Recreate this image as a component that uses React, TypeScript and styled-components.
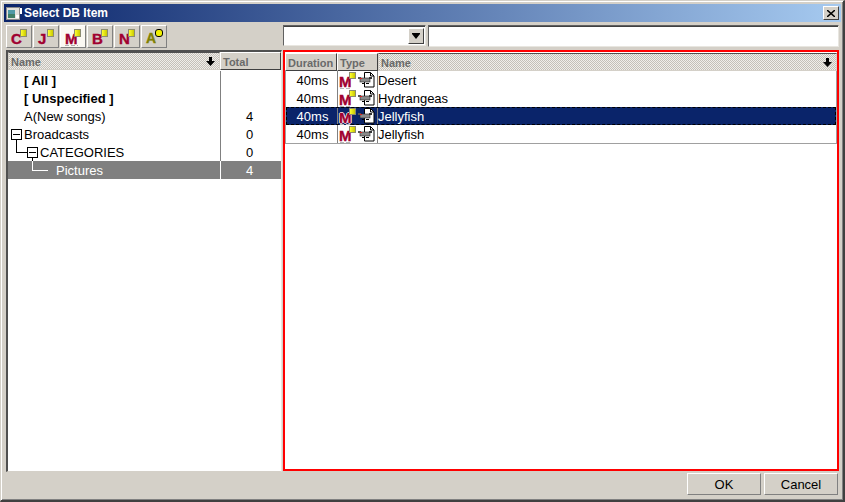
import React from 'react';
import styled, { createGlobalStyle } from 'styled-components';

const GlobalStyle = createGlobalStyle`
  html, body { margin: 0; padding: 0; background: #d4d0c8; }
  * { box-sizing: border-box; }
`;

const hatch = `repeating-conic-gradient(#c4c0b8 0% 25%, #f0eeea 0% 50%) 0 0 / 2px 2px`;
const raised = `
  border: 1px solid;
  border-color: #ffffff #808080 #808080 #ffffff;
`;

const Window = styled.div`
  width: 845px;
  height: 502px;
  display: flex;
  flex-direction: column;
  background: #d4d0c8;
  font-family: "Liberation Sans", Arial, sans-serif;
  font-size: 13px;
  color: #000;
  border-style: solid;
  border-width: 1px 2px 2px 1px;
  border-color: #d4d0c8 #404040 #404040 #d4d0c8;
  box-shadow: inset 1px 1px 0 #fff, inset -1px -1px 0 #808080;
  padding: 3px 2px 2px 3px;
  overflow: hidden;
`;

const TitleBar = styled.div`
  height: 18px;
  flex: none;
  display: flex;
  align-items: center;
  gap: 2px;
  padding: 0 2px;
  background: linear-gradient(to right, #0a246a, #a6caf0);
  color: #fff;
  font-weight: bold;
  font-size: 12px;
`;

const TitleText = styled.span`
  flex: 1;
`;

const CloseButton = styled.div`
  width: 16px;
  height: 14px;
  display: flex;
  align-items: center;
  justify-content: center;
  background: #d4d0c8;
  border: 1px solid;
  border-color: #fff #404040 #404040 #fff;
`;

const Toolbar = styled.div`
  height: 28px;
  flex: none;
  display: flex;
  align-items: flex-start;
  padding: 3px 0 0 2px;
`;

const ToolGroup = styled.div`
  width: 277px;
  display: flex;
  gap: 1px;
`;

const ToolButton = styled.div<{ $active?: boolean }>`
  width: 26px;
  height: 23px;
  display: flex;
  align-items: center;
  justify-content: center;
  ${raised}
  background: ${p => (p.$active ? '#fbf8f2' : '#d4d0c8')};
`;

const Combo = styled.div`
  width: 143px;
  height: 21px;
  display: flex;
  justify-content: flex-end;
  align-items: center;
  background: #fff;
  border: 1px solid;
  border-color: #606060 #e8e6e0 #e8e6e0 #606060;
  box-shadow: inset 0 1px 0 #404040;
  padding: 1px 1px 0 0;
`;

const ComboArrow = styled.div`
  width: 16px;
  height: 16px;
  display: flex;
  align-items: center;
  justify-content: center;
  background: #d4d0c8;
  border: 1px solid;
  border-color: #fff #404040 #404040 #fff;
`;

const SearchInput = styled.div`
  width: 411px;
  height: 22px;
  margin-left: 2px;
  background: #fff;
  border: 1px solid;
  border-color: #606060 #e8e6e0 #e8e6e0 #606060;
  box-shadow: inset 0 1px 0 #404040;
`;

const Panels = styled.div`
  flex: none;
  display: flex;
  padding-left: 2px;
`;

const LeftPanel = styled.div`
  width: 276px;
  height: 422px;
  flex: none;
  background: #fff;
  border-style: solid;
  border-width: 2px 1px 1px 2px;
  border-color: #505050 #e8e6e0 #d4d0c8 #505050;
  display: flex;
  flex-direction: column;
`;

const RightPanel = styled.div`
  width: 556px;
  height: 421px;
  margin-left: 1px;
  flex: none;
  background: #fff;
  border: 2px solid #ff0000;
  padding-top: 1px;
  display: flex;
  flex-direction: column;
`;

const HeaderRow = styled.div<{ $gap?: boolean }>`
  height: 18px;
  flex: none;
  display: flex;
  margin-bottom: ${p => (p.$gap ? 1 : 0)}px;
`;

const HeaderCell = styled.div<{ $width?: number; $sorted?: boolean }>`
  ${p => (p.$width ? `width: ${p.$width}px; flex: none;` : 'flex: 1;')}
  display: flex;
  align-items: center;
  justify-content: space-between;
  padding: 1px 4px 0 2px;
  color: #6a6a6a;
  font-weight: bold;
  font-size: 11px;
  border: 1px solid;
  border-color: #fff #404040 #404040 #fff;
  background: #d4d0c8;
  ${p =>
    p.$sorted &&
    `background: ${hatch};
     border-color: #505050 #d4d0c8 #d4d0c8 #d4d0c8;`}
`;

const TreeRow = styled.div<{ $selected?: boolean }>`
  height: 18px;
  flex: none;
  display: flex;
  background: ${p => (p.$selected ? '#808080' : 'transparent')};
  color: ${p => (p.$selected ? '#fff' : '#000')};
`;

const TreeName = styled.div<{ $bold?: boolean; $indent: number }>`
  position: relative;
  width: 212px;
  flex: none;
  display: flex;
  align-items: center;
  gap: 2px;
  padding-left: ${p => p.$indent}px;
  font-weight: ${p => (p.$bold ? 'bold' : 'normal')};
  white-space: nowrap;
`;

const TreeTotal = styled.div<{ $selected?: boolean }>`
  flex: 1;
  display: flex;
  align-items: center;
  justify-content: center;
  border-left: 1px solid ${p => (p.$selected ? '#ffffff' : '#808080')};
  padding-right: 3px;
`;

const FileList = styled.div`
  border-left: 1px solid #a0a0a0;
  border-right: 1px solid #a0a0a0;
  border-bottom: 1px solid #a0a0a0;
  width: 552px;
  display: flex;
  flex-direction: column;
`;

const FileRow = styled.div<{ $selected?: boolean }>`
  height: 18px;
  display: flex;
  background: ${p => (p.$selected ? '#0a246a' : 'transparent')};
  color: ${p => (p.$selected ? '#fff' : '#000')};
  outline: ${p => (p.$selected ? '1px dashed #000' : 'none')};
  outline-offset: -1px;
`;

const DurationCell = styled.div`
  width: 51px;
  flex: none;
  text-align: center;
  line-height: 19px;
  padding-left: 2px;
`;

const TypeCell = styled.div`
  width: 41px;
  flex: none;
  display: flex;
  align-items: center;
  gap: 2px;
  padding-left: 1px;
  border-left: 1px solid #808080;
  border-right: 1px solid #808080;
`;

const FileName = styled.div`
  flex: 1;
  line-height: 19px;
`;

const Footer = styled.div`
  flex: 1;
  display: flex;
  justify-content: flex-end;
  align-items: flex-start;
  gap: 3px;
  padding: 1px 3px 0 0;
`;

const DialogButton = styled.div`
  width: 74px;
  height: 22px;
  display: flex;
  align-items: center;
  justify-content: center;
  ${raised}
`;

const LetterMark = styled.span<{ $olive?: boolean; $dashed?: boolean }>`
  position: relative;
  display: inline-block;
  width: 16px;
  height: 15px;
  font-weight: bold;
  font-size: ${p => (p.$olive ? 14 : 15)}px;
  line-height: 19px;
  color: ${p => (p.$olive ? '#808000' : '#a00030')};
  -webkit-text-stroke: 0.4px ${p => (p.$olive ? '#808000' : '#a00030')};

  ${p =>
    p.$dashed &&
    `&::after {
      content: '';
      position: absolute;
      left: 0;
      bottom: -2px;
      width: 13px;
      height: 1px;
      background: repeating-linear-gradient(to right, #b0b0b0 0 4px, transparent 4px 6px);
    }`}
`;

const Chip = styled.i<{ $round?: boolean }>`
  position: absolute;
  top: 0;
  right: 0;
  width: 7px;
  height: 8px;
  background: linear-gradient(to right, #ffff30, #c8c800);
  border: 1px solid #8c8c70;
  ${p =>
    p.$round &&
    `top: 0;
     right: -1px;
     border: 1px solid #000;
     border-radius: 3px;
     width: 8px;
     background: #f0f000;`}
`;

const RowMark = styled.span<{ $selected?: boolean }>`
  position: relative;
  display: inline-block;
  width: 17px;
  height: 16px;
  font-weight: bold;
  font-size: 15px;
  line-height: 19px;
  color: #a00030;
  -webkit-text-stroke: 0.4px #a00030;
  ${p => p.$selected && `text-shadow: 1px 0 0 #fff, -1px 0 0 #fff, 0 1px 0 #fff, 0 -1px 0 #fff;`}

  &::after {
    content: '';
    position: absolute;
    left: 1px;
    bottom: -1px;
    width: 12px;
    height: 1px;
    background: repeating-linear-gradient(to right, #b8b8b8 0 4px, transparent 4px 6px);
  }
`;

const RowChip = styled.i`
  position: absolute;
  top: 0;
  right: 0;
  width: 7px;
  height: 7px;
  background: linear-gradient(to right, #ffff30, #c8c800);
  border: 1px solid #8c8c70;
`;

const ExpandBox = styled.span`
  position: relative;
  flex: none;
  width: 11px;
  height: 11px;
  background: #fff;
  border: 1px solid #000;

  &::after {
    content: '';
    position: absolute;
    left: 1px;
    right: 1px;
    top: 4px;
    height: 1px;
    background: #000;
  }
`;

// connector lines of the tree, hung over the rows below their parent box
const Elbow = styled.span<{ $left: number; $top: number; $width: number; $height: number; $white?: boolean }>`
  position: absolute;
  left: ${p => p.$left}px;
  top: ${p => p.$top}px;
  width: ${p => p.$width}px;
  height: ${p => p.$height}px;
  border-left: 1px solid ${p => (p.$white ? '#fff' : '#000')};
  border-bottom: ${p => (p.$width ? `1px solid ${p.$white ? '#fff' : '#000'}` : 'none')};
`;

const SortArrow = () => (
  <svg width="9" height="9" viewBox="0 0 9 9">
    <path d="M3 0h3v4h3L4.5 9 0 4h3z" fill="#000" />
  </svg>
);

const CloseIcon = () => (
  <svg width="8" height="7" viewBox="0 0 8 7">
    <path d="M0 0l8 7M8 0L0 7" stroke="#000" strokeWidth="1.5" />
  </svg>
);

const AppIcon = () => (
  <svg width="16" height="13" viewBox="0 0 16 13">
    <rect x="0.5" y="0.5" width="13" height="12" fill="#e4e2dc" stroke="#8a8a8a" />
    <rect x="2" y="3" width="7" height="4" fill="#4f9aa6" />
    <rect x="2" y="7" width="7" height="4" fill="#3f7f66" />
    <rect x="10" y="8" width="3" height="3" fill="#ffffff" />
    <rect x="14" y="1" width="2" height="6" fill="#ffffff" />
  </svg>
);

const FileIcon = () => (
  <svg width="17" height="16" viewBox="0 0 17 16">
    <path d="M6.5 .5h6l3.5 3.5v11H6.5z" fill="#fff" stroke="#000" />
    <path d="M12.5 .5v3.5H16" fill="none" stroke="#000" />
    <rect x="2" y="6" width="10" height="4" fill="#8a8a8a" stroke="#222" strokeWidth="0.6" />
    <rect x="0" y="5" width="3" height="2" fill="#555" />
    <rect x="2" y="6" width="2" height="1" fill="#e02020" />
    <rect x="11" y="5" width="3" height="2" fill="#333" />
    <path d="M4 11.5h2M8 11.5h3" stroke="#000" />
  </svg>
);

const tools = [
  { letter: 'C' },
  { letter: 'J' },
  { letter: 'M', active: true },
  { letter: 'B' },
  { letter: 'N' },
  { letter: 'A', olive: true },
];

const files = [
  { name: 'Desert' },
  { name: 'Hydrangeas' },
  { name: 'Jellyfish', selected: true },
  { name: 'Jellyfish' },
];

export default function App() {
  return (
    <Window>
      <GlobalStyle />
      <TitleBar>
        <AppIcon />
        <TitleText>Select DB Item</TitleText>
        <CloseButton>
          <CloseIcon />
        </CloseButton>
      </TitleBar>

      <Toolbar>
        <ToolGroup>
          {tools.map(t => (
            <ToolButton key={t.letter} $active={t.active}>
              <LetterMark $olive={t.olive} $dashed={t.active}>
                {t.letter}
                <Chip $round={t.olive} />
              </LetterMark>
            </ToolButton>
          ))}
        </ToolGroup>
        <Combo>
          <ComboArrow>
            <svg width="8" height="6" viewBox="0 0 8 6">
              <path d="M0 1h8L4 6zM0 0h8v1H0z" fill="#000" />
            </svg>
          </ComboArrow>
        </Combo>
        <SearchInput />
      </Toolbar>

      <Panels>
        <LeftPanel>
          <HeaderRow $gap>
            <HeaderCell $width={212} $sorted>
              Name
              <SortArrow />
            </HeaderCell>
            <HeaderCell>Total</HeaderCell>
          </HeaderRow>
          <TreeRow>
            <TreeName $bold $indent={16}>[ All ]</TreeName>
            <TreeTotal />
          </TreeRow>
          <TreeRow>
            <TreeName $bold $indent={16}>[ Unspecified ]</TreeName>
            <TreeTotal />
          </TreeRow>
          <TreeRow>
            <TreeName $indent={16}>A(New songs)</TreeName>
            <TreeTotal>4</TreeTotal>
          </TreeRow>
          <TreeRow>
            <TreeName $indent={3}>
              <ExpandBox />
              Broadcasts
              <Elbow $left={8} $top={15} $width={11} $height={13} />
            </TreeName>
            <TreeTotal>0</TreeTotal>
          </TreeRow>
          <TreeRow>
            <TreeName $indent={19}>
              <ExpandBox />
              CATEGORIES
              <Elbow $left={24} $top={15} $width={0} $height={3} />
            </TreeName>
            <TreeTotal>0</TreeTotal>
          </TreeRow>
          <TreeRow $selected>
            <TreeName $indent={48}>
              Pictures
              <Elbow $left={24} $top={0} $width={16} $height={10} $white />
            </TreeName>
            <TreeTotal $selected>4</TreeTotal>
          </TreeRow>
        </LeftPanel>

        <RightPanel>
          <HeaderRow>
            <HeaderCell $width={52}>Duration</HeaderCell>
            <HeaderCell $width={41}>Type</HeaderCell>
            <HeaderCell $sorted>
              Name
              <SortArrow />
            </HeaderCell>
          </HeaderRow>
          <FileList>
            {files.map((f, i) => (
              <FileRow key={i} $selected={f.selected}>
                <DurationCell>40ms</DurationCell>
                <TypeCell>
                  <RowMark $selected={f.selected}>
                    M
                    <RowChip />
                  </RowMark>
                  <FileIcon />
                </TypeCell>
                <FileName>{f.name}</FileName>
              </FileRow>
            ))}
          </FileList>
        </RightPanel>
      </Panels>

      <Footer>
        <DialogButton>OK</DialogButton>
        <DialogButton>Cancel</DialogButton>
      </Footer>
    </Window>
  );
}
